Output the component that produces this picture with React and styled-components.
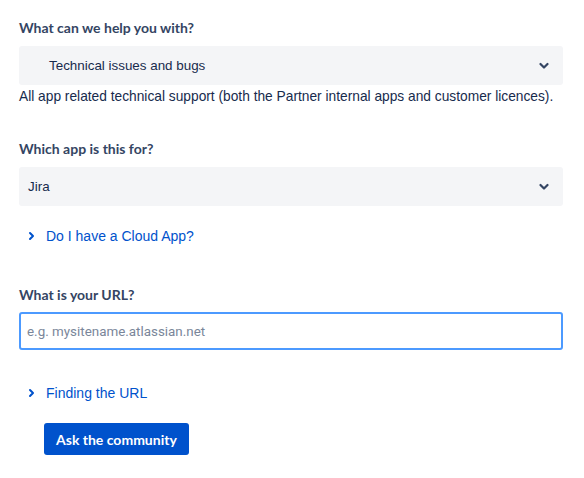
import React from "react";
import styled, { createGlobalStyle } from "styled-components";

const GlobalStyle = createGlobalStyle`
  body {
    margin: 0;
    background: #ffffff;
    font-family: "Segoe UI", "Liberation Sans", sans-serif;
  }
`;

const Form = styled.div`
  width: 544px;
  padding: 18px 0 0 19px;
  display: flex;
  flex-direction: column;
`;

const Label = styled.div`
  font-family: "Segoe UI", Lato, sans-serif;
  font-size: 14px;
  line-height: 20px;
  font-weight: 700;
  color: #344563;
  margin-top: ${(p) => p.$top || 0}px;
  margin-bottom: ${(p) => p.$gap || 8}px;
`;

const SelectBox = styled.div`
  height: 39px;
  box-sizing: border-box;
  background: #f4f5f7;
  border-radius: 3px;
  display: flex;
  align-items: center;
  justify-content: space-between;
  padding: 0 14px 0 ${(p) => (p.$indent ? 30 : 9)}px;
  font-size: 13.4px;
  color: #172b4d;
`;

const Help = styled.div`
  font-size: 13.75px;
  line-height: 20px;
  color: #172b4d;
  margin-top: 2px;
  white-space: nowrap;
`;

const Toggle = styled.a`
  display: flex;
  align-items: center;
  gap: 11px;
  padding-left: 9px;
  margin-top: ${(p) => p.$top}px;
  height: 20px;
  font-family: "Liberation Sans", Arial, sans-serif;
  font-size: 14px;
  color: #0052cc;
  text-decoration: none;
  cursor: pointer;
`;

const Input = styled.input`
  height: 38px;
  box-sizing: border-box;
  border: 2px solid #4c9aff;
  border-radius: 3px;
  padding: 0 6px;
  font-family: Roboto, "Liberation Sans", sans-serif;
  font-size: 13.4px;
  color: #172b4d;
  outline: none;
  background: #fff;
  &::placeholder {
    color: #7a869a;
  }
`;

const Button = styled.button`
  align-self: flex-start;
  margin: 20px 0 0 25px;
  height: 32px;
  padding: 0 12px;
  border: none;
  border-radius: 3px;
  background: #0052cc;
  color: #fff;
  font-family: "Segoe UI", Lato, sans-serif;
  font-size: 14px;
  font-weight: 700;
  cursor: pointer;
`;

const Down = () => (
  <svg width="10" height="8" viewBox="0 0 10 8">
    <path d="M1.5 2 L5 5.5 L8.5 2" fill="none" stroke="#344563" strokeWidth="2.2" strokeLinecap="round" strokeLinejoin="round" />
  </svg>
);

const Right = () => (
  <svg width="7" height="10" viewBox="0 0 7 10">
    <path d="M2 2 L5 5 L2 8" fill="none" stroke="#0052cc" strokeWidth="2" strokeLinecap="round" strokeLinejoin="round" />
  </svg>
);

export default function App() {
  return (
    <>
      <GlobalStyle />
      <Form>
        <Label>What can we help you with?</Label>
        <SelectBox $indent>
          <span>Technical issues and bugs</span>
          <Down />
        </SelectBox>
        <Help>
          All app related technical support (both the Partner internal apps and customer licences).
        </Help>

        <Label $top={32}>Which app is this for?</Label>
        <SelectBox>
          <span>Jira</span>
          <Down />
        </SelectBox>

        <Toggle $top={20}>
          <Right />
          Do I have a Cloud App?
        </Toggle>

        <Label $top={39} $gap={7}>What is your URL?</Label>
        <Input placeholder="e.g. mysitename.atlassian.net" />

        <Toggle $top={33}>
          <Right />
          Finding the URL
        </Toggle>

        <Button>Ask the community</Button>
      </Form>
    </>
  );
}
